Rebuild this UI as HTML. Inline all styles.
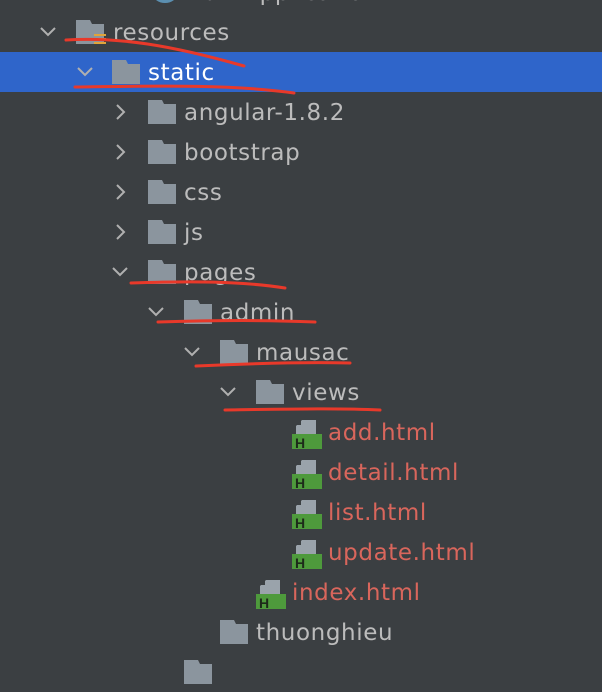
<!DOCTYPE html>
<html><head><meta charset="utf-8"><style>
body{margin:0;width:602px;height:666px;background:#3b3f42;overflow:hidden;position:relative;font-family:"DejaVu Sans","Liberation Sans",sans-serif;}
.r{position:absolute;left:0;width:602px;height:40px;}
.t{position:absolute;top:8px;font-size:23px;letter-spacing:0.6px;color:#bcbcbc;white-space:nowrap;line-height:26px;}
.h{color:#d9665c;}
.f{position:absolute;top:8px;}
.c{position:absolute;top:12px;}
.sel{background:#2f65ca;}
.sel .t{color:#fff;}
</style></head><body>
<svg width="0" height="0" style="position:absolute"><defs>
<symbol id="fold" viewBox="0 0 28 24"><path d="M0 0H14L16 4H28V24H0Z" fill="#8b959e"/></symbol>
<symbol id="dn" viewBox="0 0 18 12"><path d="M2 2L9 9L16 2" stroke="#b0b0b0" stroke-width="2" fill="none"/></symbol>
<symbol id="rt" viewBox="0 0 12 18"><path d="M2 2L9 9L2 16" stroke="#b0b0b0" stroke-width="2" fill="none"/></symbol>
<symbol id="file" viewBox="0 0 30 30"><path d="M4 0H24V14H4V6L10 0Z" fill="#9aa3ab"/><path d="M4 5L9 0V5Z" fill="#3b3f42"/><rect x="0" y="14" width="30" height="15" fill="#4e9a3c"/><text x="3" y="28" font-size="14" font-family="Liberation Sans" font-weight="bold" fill="#1d2a1a">H</text></symbol>
</defs></svg>

<div class="r" style="top:-28px"><svg style="position:absolute;left:150px;top:20px" width="30" height="12"><ellipse cx="15" cy="2" rx="12" ry="9" fill="#5b8fb0"/></svg><span class="t" style="left:185px">DuthApplication</span></div>

<div class="r" style="top:12px"><svg class="c" style="left:39px;top:14px" width="18" height="12"><use href="#dn"/></svg><svg class="f" style="left:76px" width="28" height="24"><use href="#fold"/></svg><svg style="position:absolute;left:94px;top:22px" width="12" height="12"><rect y="0" width="12" height="2" fill="#e0a43a"/><rect y="4" width="12" height="2" fill="#e0a43a"/><rect y="8" width="12" height="2" fill="#e0a43a"/></svg><span class="t" style="left:113px">resources</span></div>
<div class="r sel" style="top:52px"><svg class="c" style="left:76px;top:14px" width="18" height="12"><use href="#dn"/></svg><svg class="f" style="left:112px" width="28" height="24"><use href="#fold"/></svg><span class="t" style="left:148px">static</span></div>
<div class="r" style="top:92px"><svg class="c" style="left:115px;top:11px" width="12" height="18"><use href="#rt"/></svg><svg class="f" style="left:148px" width="28" height="24"><use href="#fold"/></svg><span class="t" style="left:184px">angular-1.8.2</span></div>
<div class="r" style="top:132px"><svg class="c" style="left:115px;top:11px" width="12" height="18"><use href="#rt"/></svg><svg class="f" style="left:148px" width="28" height="24"><use href="#fold"/></svg><span class="t" style="left:184px">bootstrap</span></div>
<div class="r" style="top:172px"><svg class="c" style="left:115px;top:11px" width="12" height="18"><use href="#rt"/></svg><svg class="f" style="left:148px" width="28" height="24"><use href="#fold"/></svg><span class="t" style="left:184px">css</span></div>
<div class="r" style="top:212px"><svg class="c" style="left:115px;top:11px" width="12" height="18"><use href="#rt"/></svg><svg class="f" style="left:148px" width="28" height="24"><use href="#fold"/></svg><span class="t" style="left:184px">js</span></div>
<div class="r" style="top:252px"><svg class="c" style="left:111px;top:14px" width="18" height="12"><use href="#dn"/></svg><svg class="f" style="left:148px" width="28" height="24"><use href="#fold"/></svg><span class="t" style="left:184px">pages</span></div>
<div class="r" style="top:292px"><svg class="c" style="left:147px;top:14px" width="18" height="12"><use href="#dn"/></svg><svg class="f" style="left:184px" width="28" height="24"><use href="#fold"/></svg><span class="t" style="left:220px">admin</span></div>
<div class="r" style="top:332px"><svg class="c" style="left:183px;top:14px" width="18" height="12"><use href="#dn"/></svg><svg class="f" style="left:220px" width="28" height="24"><use href="#fold"/></svg><span class="t" style="left:256px">mausac</span></div>
<div class="r" style="top:372px"><svg class="c" style="left:219px;top:14px" width="18" height="12"><use href="#dn"/></svg><svg class="f" style="left:256px" width="28" height="24"><use href="#fold"/></svg><span class="t" style="left:292px">views</span></div>
<div class="r" style="top:412px"><svg style="position:absolute;left:292px;top:8px" width="30" height="30"><use href="#file"/></svg><span class="t h" style="left:328px">add.html</span></div>
<div class="r" style="top:452px"><svg style="position:absolute;left:292px;top:8px" width="30" height="30"><use href="#file"/></svg><span class="t h" style="left:328px">detail.html</span></div>
<div class="r" style="top:492px"><svg style="position:absolute;left:292px;top:8px" width="30" height="30"><use href="#file"/></svg><span class="t h" style="left:328px">list.html</span></div>
<div class="r" style="top:532px"><svg style="position:absolute;left:292px;top:8px" width="30" height="30"><use href="#file"/></svg><span class="t h" style="left:328px">update.html</span></div>
<div class="r" style="top:572px"><svg style="position:absolute;left:256px;top:8px" width="30" height="30"><use href="#file"/></svg><span class="t h" style="left:292px">index.html</span></div>
<div class="r" style="top:612px"><svg class="f" style="left:220px" width="28" height="24"><use href="#fold"/></svg><span class="t" style="left:256px">thuonghieu</span></div>
<div class="r" style="top:652px"><svg class="f" style="left:184px" width="28" height="24"><use href="#fold"/></svg></div>

<svg style="position:absolute;left:0;top:0" width="602" height="666" fill="none" stroke="#e8392a" stroke-width="3" stroke-linecap="round">
<path d="M66 40C120 37 170 45 244 66"/>
<path d="M75 87C150 86 230 84 294 93"/>
<path d="M131 283C190 281 240 281 285 288"/>
<path d="M158 322C220 320 270 320 315 322"/>
<path d="M196 366C260 363 310 362 350 363"/>
<path d="M225 410C290 409 340 408 380 410"/>
</svg>
</body></html>
